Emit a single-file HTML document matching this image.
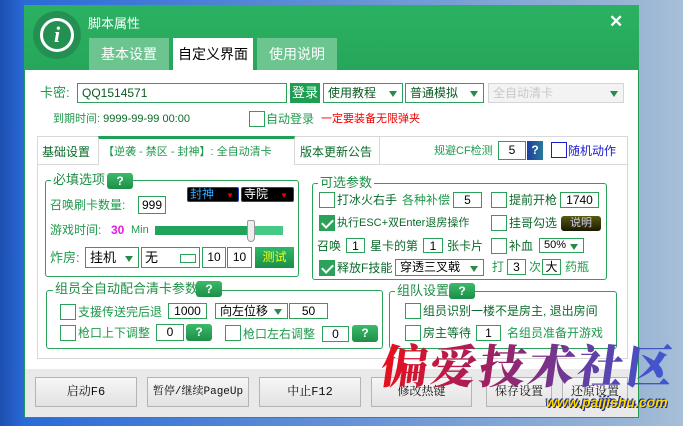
<!DOCTYPE html>
<html><head><meta charset="utf-8"><style>
*{margin:0;padding:0;box-sizing:border-box}
body{width:683px;height:426px;overflow:hidden;position:relative;font-family:"Liberation Sans","Noto Sans CJK SC",sans-serif;font-size:12px;color:#1f9a4c;background:linear-gradient(90deg,#1d4fb0 0,#2a6ad8 24px,#9ab6d4 639px,#a7bfd8 683px)}
.a{position:absolute;white-space:nowrap;line-height:16px}
.win{position:absolute;left:24px;top:5px;width:615px;height:413px;background:#fff;border:1px solid #239a52}
.hdr{position:absolute;left:24px;top:5px;width:615px;height:65px;background:linear-gradient(#2bb162,#26a65a)}
.tab{position:absolute;top:38px;height:32px;background:#6cc48f;color:#fff;font-size:14px;text-align:center;line-height:32px}
.box{position:absolute;border:1px solid #2aa25a;background:#fff;color:#000;font-size:12px;line-height:14px;text-align:center}
.sel{position:absolute;border:1px solid #2aa25a;background:#fff;color:#0a5a22;font-size:12px;padding-left:4px}
.sel:after{content:"";position:absolute;right:5px;top:50%;margin-top:-2px;border:4px solid transparent;border-top:6px solid #2a8a4a;border-bottom:0}
.cb{position:absolute;width:16px;height:16px;border:1px solid #2aa25a;background:#fff}
.ck{background:#2aa25a}
.ck:after{content:"";position:absolute;left:4px;top:1px;width:5px;height:9px;border:solid #fff;border-width:0 2px 2px 0;transform:rotate(45deg)}
.q{position:absolute;width:26px;height:16px;border-radius:3px;background:linear-gradient(#3bbb6a,#1d8e48);color:#fff;font-weight:bold;font-size:12px;text-align:center;line-height:16px}
.grp{position:absolute;border:1px solid #2aa25a;border-radius:3px}
.gt{position:absolute;background:#fff;padding:0 2px;font-size:13px;line-height:16px;color:#1c8f45}
.btn{position:absolute;top:377px;height:30px;border:1px solid #b5b5b5;background:linear-gradient(#f6f6f6,#e2e2e2);color:#111;font-family:"Liberation Mono","Noto Serif CJK SC",serif;font-size:12px;text-align:center;line-height:28px}
.dk{color:#0a6a2a}
</style></head><body>
<div class="win"></div>
<div class="hdr"></div>
<div class="a" style="left:33px;top:11px;width:48px;height:48px;border-radius:50%;background:#239052"></div>
<div class="a" style="left:40px;top:18px;width:34px;height:34px;border-radius:50%;border:3px solid #fff;color:#fff;font:italic bold 22px 'Liberation Serif',serif;text-align:center;line-height:28px">i</div>
<div class="a" style="left:88px;top:16px;color:#fff;font-size:13px">脚本属性</div>
<div class="a" style="left:609px;top:14px;color:#fff;font-size:17px;font-weight:bold">✕</div>
<div class="tab" style="left:89px;width:80px">基本设置</div>
<div class="tab" style="left:173px;width:80px;background:#fff;color:#000">自定义界面</div>
<div class="tab" style="left:257px;width:80px">使用说明</div>

<div class="a" style="left:40px;top:85px;font-size:13px">卡密:</div>
<div class="box" style="left:77px;top:83px;width:210px;height:20px;text-align:left;padding-left:4px;font-size:12px;line-height:18px;color:#0a5a22">QQ1514571</div>
<div class="a" style="left:290px;top:83px;width:30px;height:20px;background:#1e9e50;color:#fff;font-size:13px;text-align:center;line-height:20px">登录</div>
<div class="sel" style="left:323px;top:83px;width:80px;height:20px;line-height:18px">使用教程</div>
<div class="sel" style="left:405px;top:83px;width:79px;height:20px;line-height:18px">普通模拟</div>
<div class="sel" style="left:488px;top:83px;width:136px;height:20px;line-height:18px;border-color:#d5d5d5;background:#f3f3f3;color:#c8c8c8">全自动清卡</div>
<div class="a" style="left:53px;top:111px;font-size:11px">到期时间: <span class="dk">9999-99-99 00:00</span></div>
<div class="cb" style="left:249px;top:111px"></div>
<div class="a" style="left:266px;top:111px;font-size:12px">自动登录</div>
<div class="a" style="left:321px;top:111px;font-size:11px;color:#e00">一定要装备无限弹夹</div>

<div class="a" style="left:37px;top:136px;width:591px;height:223px;border:1px solid #d8d8d8"></div>
<div class="a" style="left:37px;top:164px;width:591px;height:1px;background:#d8d8d8"></div>
<div class="a" style="left:42px;top:144px;color:#0a6a2a;font-size:12px">基础设置</div>
<div class="a" style="left:98px;top:136px;width:197px;height:29px;background:#fff;border-left:1px solid #d8d8d8;border-right:1px solid #d8d8d8;border-top:3px solid #1ea256"></div>
<div class="a" style="left:103px;top:144px;font-size:11px">【逆袭 - 禁区 - 封神】: 全自动清卡</div>
<div class="a" style="left:300px;top:144px;color:#0a6a2a">版本更新公告</div>
<div class="a" style="left:379px;top:136px;width:1px;height:28px;background:#d8d8d8"></div>
<div class="a" style="left:434px;top:143px;font-size:11px">规避CF检测</div>
<div class="box" style="left:498px;top:141px;width:28px;height:19px;line-height:17px;font-size:12px">5</div>
<div class="a" style="left:527px;top:141px;width:16px;height:19px;background:linear-gradient(90deg,#1a3ea0,#2a7a9a);color:#fff;font-weight:bold;text-align:center;line-height:19px">?</div>
<div class="cb" style="left:551px;top:142px;border-color:#1a1ad0"></div>
<div class="a" style="left:568px;top:143px;color:#1a1ad0">随机动作</div>

<div class="grp" style="left:45px;top:180px;width:254px;height:97px"></div>
<div class="gt" style="left:51px;top:172px">必填选项</div>
<div class="q" style="left:107px;top:173px">?</div>
<div class="a" style="left:187px;top:187px;width:52px;height:15px;background:#000;border:1px solid #2040c0;border-radius:2px;color:#3af;font-size:12px;line-height:13px;padding-left:2px">封神<span style="color:#e00;font-size:8px;margin-left:12px">▼</span></div>
<div class="a" style="left:241px;top:187px;width:53px;height:15px;background:#000;border:1px solid #2040c0;border-radius:2px;color:#fff;font-size:12px;line-height:13px;padding-left:2px">寺院<span style="color:#e00;font-size:8px;margin-left:12px">▼</span></div>
<div class="a" style="left:50px;top:197px;font-size:12px">召唤刷卡数量:</div>
<div class="box" style="left:138px;top:196px;width:28px;height:18px;line-height:16px">999</div>
<div class="a" style="left:50px;top:222px">游戏时间:</div>
<div class="a" style="left:111px;top:222px;color:#e020e0;font-weight:bold">30</div>
<div class="a" style="left:131px;top:222px;font-size:11px">Min</div>
<div class="a" style="left:155px;top:226px;width:128px;height:9px;background:#47c985"></div>
<div class="a" style="left:155px;top:226px;width:96px;height:9px;background:#21a35a"></div>
<div class="a" style="left:247px;top:220px;width:8px;height:22px;background:#eee;border:1px solid #999;border-radius:2px 2px 4px 4px"></div>
<div class="a" style="left:50px;top:250px;font-size:13px">炸房:</div>
<div class="sel" style="left:85px;top:247px;width:54px;height:21px;line-height:19px;color:#000;font-size:13px">挂机</div>
<div class="box" style="left:141px;top:247px;width:59px;height:21px;text-align:left;padding-left:3px;font-size:13px;line-height:19px">无<span style="position:absolute;left:38px;top:6px;width:16px;height:9px;border:1px solid #2aa25a"></span></div>
<div class="box" style="left:202px;top:247px;width:24px;height:21px;line-height:19px">10</div>
<div class="box" style="left:227px;top:247px;width:25px;height:21px;line-height:19px">10</div>
<div class="a" style="left:255px;top:247px;width:39px;height:21px;background:linear-gradient(#2fb865,#1c8e48);color:#ff0;font-size:12px;text-align:center;line-height:21px">测试</div>

<div class="grp" style="left:46px;top:290px;width:337px;height:59px"></div>
<div class="gt" style="left:53px;top:281px">组员全自动配合清卡参数</div>
<div class="q" style="left:196px;top:281px">?</div>
<div class="cb" style="left:60px;top:304px"></div>
<div class="a" style="left:78px;top:304px;font-size:12px">支援传送完后退</div>
<div class="box" style="left:168px;top:303px;width:39px;height:16px">1000</div>
<div class="sel" style="left:215px;top:303px;width:73px;height:16px;line-height:14px;color:#000">向左位移</div>
<div class="box" style="left:289px;top:303px;width:39px;height:16px">50</div>
<div class="cb" style="left:60px;top:325px"></div>
<div class="a" style="left:78px;top:325px;font-size:12px">枪口上下调整</div>
<div class="box" style="left:156px;top:324px;width:28px;height:17px">0</div>
<div class="q" style="left:186px;top:324px;height:17px">?</div>
<div class="cb" style="left:225px;top:325px"></div>
<div class="a" style="left:243px;top:326px;font-size:12px">枪口左右调整</div>
<div class="box" style="left:322px;top:326px;width:27px;height:16px">0</div>
<div class="q" style="left:352px;top:325px;height:17px">?</div>

<div class="grp" style="left:312px;top:183px;width:295px;height:97px"></div>
<div class="gt" style="left:318px;top:175px">可选参数</div>
<div class="cb" style="left:319px;top:192px"></div>
<div class="a dk" style="left:337px;top:192px">打冰火右手</div>
<div class="a" style="left:402px;top:192px">各种补偿</div>
<div class="box" style="left:453px;top:192px;width:29px;height:16px">5</div>
<div class="cb" style="left:491px;top:192px"></div>
<div class="a dk" style="left:509px;top:192px">提前开枪</div>
<div class="box" style="left:560px;top:192px;width:39px;height:16px">1740</div>
<div class="cb ck" style="left:319px;top:215px"></div>
<div class="a dk" style="left:337px;top:215px;font-size:11px">执行ESC+双Enter退房操作</div>
<div class="cb" style="left:491px;top:215px"></div>
<div class="a dk" style="left:509px;top:215px">挂哥勾选</div>
<div class="a" style="left:561px;top:216px;width:40px;height:15px;border-radius:3px;background:linear-gradient(#5a5a10,#1a1a00);color:#cce;font-size:11px;text-align:center;line-height:15px">说明</div>
<div class="a dk" style="left:317px;top:238px">召唤</div>
<div class="box" style="left:346px;top:238px;width:19px;height:15px">1</div>
<div class="a dk" style="left:370px;top:238px">星卡的第</div>
<div class="box" style="left:423px;top:238px;width:20px;height:15px">1</div>
<div class="a dk" style="left:447px;top:238px">张卡片</div>
<div class="cb" style="left:491px;top:238px"></div>
<div class="a dk" style="left:509px;top:238px">补血</div>
<div class="sel" style="left:539px;top:238px;width:45px;height:15px;line-height:13px;color:#000;font-size:11px">50%</div>
<div class="cb ck" style="left:319px;top:260px"></div>
<div class="a dk" style="left:337px;top:260px">释放F技能</div>
<div class="sel" style="left:395px;top:259px;width:89px;height:17px;line-height:15px;color:#000">穿透三叉戟</div>
<div class="a" style="left:492px;top:259px">打</div>
<div class="box" style="left:507px;top:259px;width:19px;height:16px">3</div>
<div class="a" style="left:529px;top:259px">次</div>
<div class="box" style="left:542px;top:259px;width:19px;height:16px">大</div>
<div class="a" style="left:565px;top:259px">药瓶</div>

<div class="grp" style="left:389px;top:291px;width:228px;height:58px"></div>
<div class="gt" style="left:395px;top:283px">组队设置</div>
<div class="q" style="left:449px;top:283px">?</div>
<div class="cb" style="left:405px;top:303px"></div>
<div class="a dk" style="left:423px;top:303px">组员识别一楼不是房主, 退出房间</div>
<div class="cb" style="left:405px;top:325px"></div>
<div class="a dk" style="left:423px;top:325px">房主等待</div>
<div class="box" style="left:476px;top:325px;width:25px;height:16px">1</div>
<div class="a" style="left:507px;top:325px">名组员准备开游戏</div>

<div class="a" style="left:25px;top:369px;width:613px;height:48px;background:#e9e9e9"></div>
<div class="btn" style="left:35px;width:102px">启动F6</div>
<div class="btn" style="left:147px;width:102px;font-size:11px">暂停/继续PageUp</div>
<div class="btn" style="left:259px;width:102px">中止F12</div>
<div class="btn" style="left:371px;width:101px">修改热键</div>
<div class="btn" style="left:486px;width:66px">保存设置</div>
<div class="btn" style="left:562px;width:66px">还原设置</div>

<div class="a" style="left:382px;top:336px;font-family:'Noto Serif CJK SC',serif;font-weight:900;font-size:46px;letter-spacing:3px;line-height:56px;background:linear-gradient(90deg,#e8101c,#a02060 35%,#6a3a9a 65%,#3a5ad8);-webkit-background-clip:text;background-clip:text;color:transparent;transform:skewX(-8deg)">偏爱技术社区</div>
<div class="a" style="left:546px;top:394px;font:italic bold 14px 'Liberation Sans',sans-serif;color:#ffd800;text-shadow:1px 1px 0 #1a2a90,-1px -1px 0 #1a2a90">www.paijishu.com</div>
</body></html>
